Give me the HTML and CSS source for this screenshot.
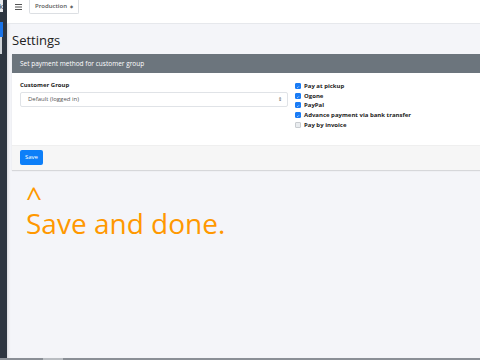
FILE: index.html
```html
<!DOCTYPE html>
<html>
<head>
<meta charset="utf-8">
<link rel="stylesheet" href="styles.css">
</head>
<body>
<div class="frame">
  <aside class="sidebar">
    <div class="brand">k</div>
    <div class="side-gap"></div>
    <div class="side-active"></div>
    <div class="side-item"></div>
  </aside>
  <main class="main">
    <header class="topbar">
      <svg class="burger" width="7" height="6" viewBox="0 0 7 6"><path d="M0 .5h7M0 3h7M0 5.5h7" stroke="#555" stroke-width="1"/></svg>
      <div class="env">Production <span class="env-arrow">&#9670;</span></div>
    </header>
    <div class="content">
      <h1 class="title">Settings</h1>
      <section class="card">
        <div class="card-header">Set payment method for customer group</div>
        <div class="card-body">
          <div class="col">
            <div class="label">Customer Group</div>
            <div class="select">Default (logged in)<span class="sel-arrow">&#8661;</span></div>
          </div>
          <div class="col checks">
            <div class="check"><span class="box on"><svg width="6" height="6" viewBox="0 0 6 6"><path d="M1.6 3.1l.9.9 1.9-2" stroke="#fff" stroke-width=".8" fill="none"/></svg></span>Pay at pickup</div>
            <div class="check"><span class="box on"><svg width="6" height="6" viewBox="0 0 6 6"><path d="M1.6 3.1l.9.9 1.9-2" stroke="#fff" stroke-width=".8" fill="none"/></svg></span>Ogone</div>
            <div class="check"><span class="box on"><svg width="6" height="6" viewBox="0 0 6 6"><path d="M1.6 3.1l.9.9 1.9-2" stroke="#fff" stroke-width=".8" fill="none"/></svg></span>PayPal</div>
            <div class="check"><span class="box on"><svg width="6" height="6" viewBox="0 0 6 6"><path d="M1.6 3.1l.9.9 1.9-2" stroke="#fff" stroke-width=".8" fill="none"/></svg></span>Advance payment via bank transfer</div>
            <div class="check"><span class="box"></span>Pay by invoice</div>
          </div>
        </div>
        <div class="card-footer"><button class="btn">Save</button></div>
      </section>
      <div class="note">
        <div class="note-line">^</div>
        <div class="note-line">Save and done.</div>
      </div>
    </div>
  </main>
</div>
<div class="hscroll"><div class="thumb"></div></div>
</body>
</html>
```
FILE: styles.css
```css
html, body {
  margin: 0;
  padding: 0;
}
body {
  width: 480px;
  height: 360px;
  overflow: hidden;
  display: flex;
  flex-direction: column;
  font-family: "Open Sans", "Noto Sans", sans-serif;
  background: #f4f5f9;
}
.frame {
  flex: 1;
  display: flex;
  min-height: 0;
}
.sidebar {
  width: 7px;
  flex-shrink: 0;
  background: #2e3641;
  display: flex;
  flex-direction: column;
}
.brand {
  width: 3px;
  height: 12px;
  background: #e9ebee;
  color: #333;
  font-size: 8px;
  line-height: 12px;
  overflow: hidden;
  text-indent: -1px;
}
.side-gap {
  height: 10px;
}
.side-active {
  width: 2.5px;
  height: 15px;
  background: #1a73e8;
}
.side-item {
  width: 2px;
  height: 17px;
  border: 0.5px solid #cfd3d8;
  box-sizing: border-box;
}
.main {
  flex: 1;
  min-width: 0;
  display: flex;
  flex-direction: column;
  box-shadow: inset 3px 0 3px -2px rgba(0,0,0,0.12);
}
.topbar {
  height: 24px;
  flex-shrink: 0;
  background: #fff;
  border-bottom: 1px solid #e6e8ec;
  display: flex;
  align-items: flex-start;
  padding-left: 8px;
  box-sizing: border-box;
}
.burger {
  margin-top: 4px;
}
.env {
  margin-left: 7px;
  height: 14px;
  width: 50px;
  box-sizing: border-box;
  border: 1px solid #dcdfe3;
  border-top: none;
  border-radius: 0 0 2px 2px;
  padding: 0 5px;
  font-size: 6px;
  font-weight: 600;
  color: #555;
  line-height: 13px;
  display: flex;
  justify-content: space-between;
}
.env-arrow {
  font-size: 4px;
  color: #666;
}
.content {
  padding: 7px 0 0 5px;
  width: 580px;
}
.title {
  margin: 0;
  font-size: 13px;
  font-weight: 400;
  line-height: 18px;
  color: #222;
}
.card {
  margin-top: 5px;
  width: 566px;
  background: #fff;
  box-shadow: 0 1px 1px rgba(0,0,0,0.12);
}
.card-header {
  height: 19px;
  background: #6c757d;
  color: #fff;
  font-size: 6.5px;
  line-height: 19px;
  padding-left: 8px;
}
.card-body {
  display: grid;
  grid-template-columns: 268px 1fr;
  column-gap: 6px;
  padding: 8px 8px 8px;
  height: 72px;
  box-sizing: border-box;
}
.label {
  font-size: 6px;
  font-weight: 700;
  color: #222;
  line-height: 8px;
  margin-bottom: 3px;
}
.select {
  height: 15px;
  box-sizing: border-box;
  border: 1px solid #e0e3e7;
  border-radius: 2px;
  font-size: 6px;
  line-height: 13px;
  color: #555;
  padding: 0 5px 0 7px;
  display: flex;
  justify-content: space-between;
}
.sel-arrow {
  font-size: 5px;
}
.checks {
  display: flex;
  flex-direction: column;
  padding-left: 1px;
}
.check {
  height: 9.75px;
  display: flex;
  align-items: center;
  font-size: 6px;
  font-weight: 700;
  color: #222;
}
.box {
  width: 6px;
  height: 6px;
  border-radius: 1px;
  box-sizing: border-box;
  background: #e9ecef;
  border: 0.5px solid #c8ccd0;
  margin-right: 3px;
  display: flex;
}
.box.on {
  background: #1a7cf5;
  border-color: #1a7cf5;
}
.card-footer {
  background: #f6f6f6;
  border-top: 1px solid #efefef;
  height: 25px;
  box-sizing: border-box;
  padding: 4px 8px;
  display: flex;
  align-items: flex-start;
}
.btn {
  display: block;
  width: 23px;
  height: 15px;
  padding: 0;
  border: none;
  border-radius: 2px;
  background: #0d7ff8;
  color: #fff;
  font-family: inherit;
  font-size: 6px;
  line-height: 15px;
}
.note {
  margin: 13px 0 0 14px;
  color: #ff9800;
  font-size: 28px;
  font-weight: 500;
}
.note-line {
  line-height: 27px;
}
.hscroll {
  height: 2px;
  flex-shrink: 0;
  background: #8a8f96;
  display: flex;
  padding-left: 43px;
}
.thumb {
  width: 20px;
  background: #b9bdc2;
}
```
